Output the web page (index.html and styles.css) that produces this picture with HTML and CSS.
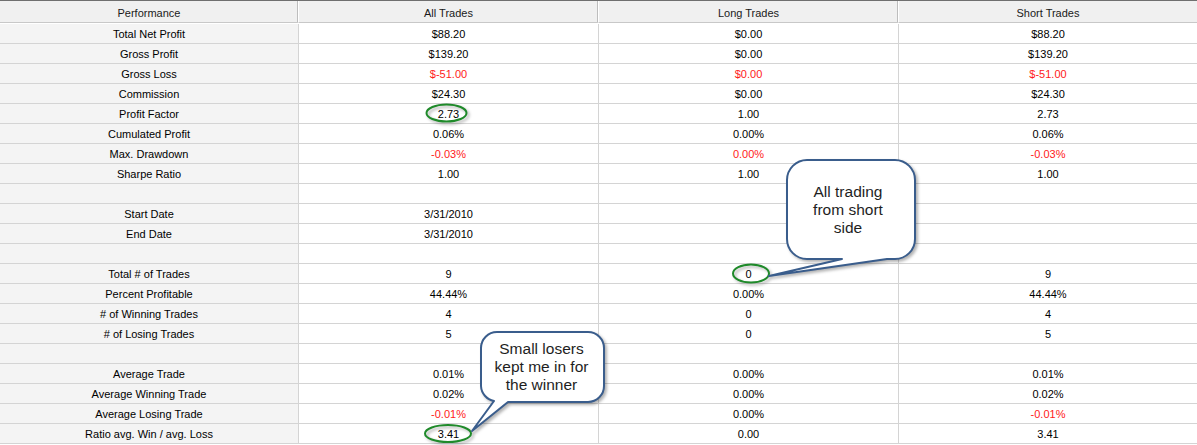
FILE: index.html
```html
<!DOCTYPE html>
<html lang="en">
<head>
<meta charset="utf-8">
<title>Performance</title>
<link rel="stylesheet" href="styles.css">
</head>
<body>
<div class="report">
  <div class="row head">
    <div class="cell">Performance</div>
    <div class="cell">All Trades</div>
    <div class="cell">Long Trades</div>
    <div class="cell">Short Trades</div>
  </div>
  <div class="row"><div class="cell label">Total Net Profit</div><div class="cell">$88.20</div><div class="cell">$0.00</div><div class="cell">$88.20</div></div>
  <div class="row"><div class="cell label">Gross Profit</div><div class="cell">$139.20</div><div class="cell">$0.00</div><div class="cell">$139.20</div></div>
  <div class="row"><div class="cell label">Gross Loss</div><div class="cell neg">$-51.00</div><div class="cell neg">$0.00</div><div class="cell neg">$-51.00</div></div>
  <div class="row"><div class="cell label">Commission</div><div class="cell">$24.30</div><div class="cell">$0.00</div><div class="cell">$24.30</div></div>
  <div class="row"><div class="cell label">Profit Factor</div><div class="cell">2.73</div><div class="cell">1.00</div><div class="cell">2.73</div></div>
  <div class="row"><div class="cell label">Cumulated Profit</div><div class="cell">0.06%</div><div class="cell">0.00%</div><div class="cell">0.06%</div></div>
  <div class="row"><div class="cell label">Max. Drawdown</div><div class="cell neg">-0.03%</div><div class="cell neg">0.00%</div><div class="cell neg">-0.03%</div></div>
  <div class="row"><div class="cell label">Sharpe Ratio</div><div class="cell">1.00</div><div class="cell">1.00</div><div class="cell">1.00</div></div>
  <div class="row"><div class="cell label"></div><div class="cell"></div><div class="cell"></div><div class="cell"></div></div>
  <div class="row"><div class="cell label">Start Date</div><div class="cell">3/31/2010</div><div class="cell"></div><div class="cell"></div></div>
  <div class="row"><div class="cell label">End Date</div><div class="cell">3/31/2010</div><div class="cell"></div><div class="cell"></div></div>
  <div class="row"><div class="cell label"></div><div class="cell"></div><div class="cell"></div><div class="cell"></div></div>
  <div class="row"><div class="cell label">Total # of Trades</div><div class="cell">9</div><div class="cell">0</div><div class="cell">9</div></div>
  <div class="row"><div class="cell label">Percent Profitable</div><div class="cell">44.44%</div><div class="cell">0.00%</div><div class="cell">44.44%</div></div>
  <div class="row"><div class="cell label"># of Winning Trades</div><div class="cell">4</div><div class="cell">0</div><div class="cell">4</div></div>
  <div class="row"><div class="cell label"># of Losing Trades</div><div class="cell">5</div><div class="cell">0</div><div class="cell">5</div></div>
  <div class="row"><div class="cell label"></div><div class="cell"></div><div class="cell"></div><div class="cell"></div></div>
  <div class="row"><div class="cell label">Average Trade</div><div class="cell">0.01%</div><div class="cell">0.00%</div><div class="cell">0.01%</div></div>
  <div class="row"><div class="cell label">Average Winning Trade</div><div class="cell">0.02%</div><div class="cell">0.00%</div><div class="cell">0.02%</div></div>
  <div class="row"><div class="cell label">Average Losing Trade</div><div class="cell neg">-0.01%</div><div class="cell">0.00%</div><div class="cell neg">-0.01%</div></div>
  <div class="row"><div class="cell label">Ratio avg. Win / avg. Loss</div><div class="cell">3.41</div><div class="cell">0.00</div><div class="cell">3.41</div></div>

  <div class="overlay">
    <svg class="marks" width="1197" height="445" viewBox="0 0 1197 445">
      <g class="shadowed">
        <ellipse class="ring" cx="446.5" cy="113" rx="20" ry="8.5"/>
        <ellipse class="ring" cx="751" cy="273.5" rx="18" ry="9"/>
        <ellipse class="ring" cx="448" cy="433.5" rx="23" ry="8.5"/>
        <path class="bubble" d="M807 160 H895 A20 20 0 0 1 915 180 V239 A20 20 0 0 1 895 259 H887 L769 276 L842 259 H807 A20 20 0 0 1 787 239 V180 A20 20 0 0 1 807 160 Z"/>
        <path class="bubble" d="M497 332 H588 A16 16 0 0 1 604 348 V386 A16 16 0 0 1 588 402 H508 L472 431 L494 401 A16 16 0 0 1 481 386 V348 A16 16 0 0 1 497 332 Z"/>
      </g>
    </svg>
    <div class="note note-short">All trading<br>from short<br>side</div>
    <div class="note note-small">Small losers<br>kept me in for<br>the winner</div>
  </div>
</div>
</body>
</html>
```
FILE: styles.css
```css
html, body {
  margin: 0;
  padding: 0;
  background: #ffffff;
}

.report {
  position: relative;
  width: 1197px;
  height: 445px;
  overflow: hidden;
  font-family: "Liberation Sans", Arial, sans-serif;
  font-size: 11px;
  color: #000;
}

.row {
  display: grid;
  grid-template-columns: 299px 300px 300px 298px;
  height: 20px;
}

.cell {
  box-sizing: border-box;
  border-right: 1px solid #d4d4d4;
  border-bottom: 1px solid #d4d4d4;
  display: flex;
  align-items: center;
  justify-content: center;
  white-space: nowrap;
  line-height: 13px;
  padding-top: 1px;
}

.cell:last-child {
  border-right: none;
}

.label {
  background: #f4f4f4;
}

.neg {
  color: #ff1a1a;
}

.head {
  height: 24px;
  border-top: 1px solid #6f6f6f;
  box-sizing: border-box;
}

.head .cell {
  background: #f0f0f0;
  color: #1a1a1a;
  border-bottom: 1px solid #c8c8c8;
  border-right: 1px solid #ffffff;
  box-shadow: inset -1px 0 0 #bdbdbd;
  padding-top: 3px;
  height: 22px;
}

.head .cell:last-child {
  box-shadow: none;
  border-right: none;
}

.overlay {
  position: absolute;
  left: 0;
  top: 0;
  width: 1197px;
  height: 445px;
  pointer-events: none;
}

.marks {
  position: absolute;
  left: 0;
  top: 0;
}

.shadowed {
  filter: drop-shadow(2px 2px 1.5px rgba(0, 0, 0, 0.3));
}

.ring {
  fill: none;
  stroke: #1f8a2a;
  stroke-width: 2;
}

.bubble {
  fill: #ffffff;
  stroke: #3a5d8c;
  stroke-width: 2;
  stroke-linejoin: round;
}

.note {
  position: absolute;
  display: flex;
  align-items: center;
  justify-content: center;
  text-align: center;
  font-family: "Liberation Sans", Arial, sans-serif;
  font-size: 15.5px;
  line-height: 18px;
  color: #1e1e1e;
}

.note-short {
  left: 787px;
  top: 160px;
  width: 122px;
  height: 100px;
}

.note-small {
  left: 481px;
  top: 332px;
  width: 121px;
  height: 70px;
}
```
